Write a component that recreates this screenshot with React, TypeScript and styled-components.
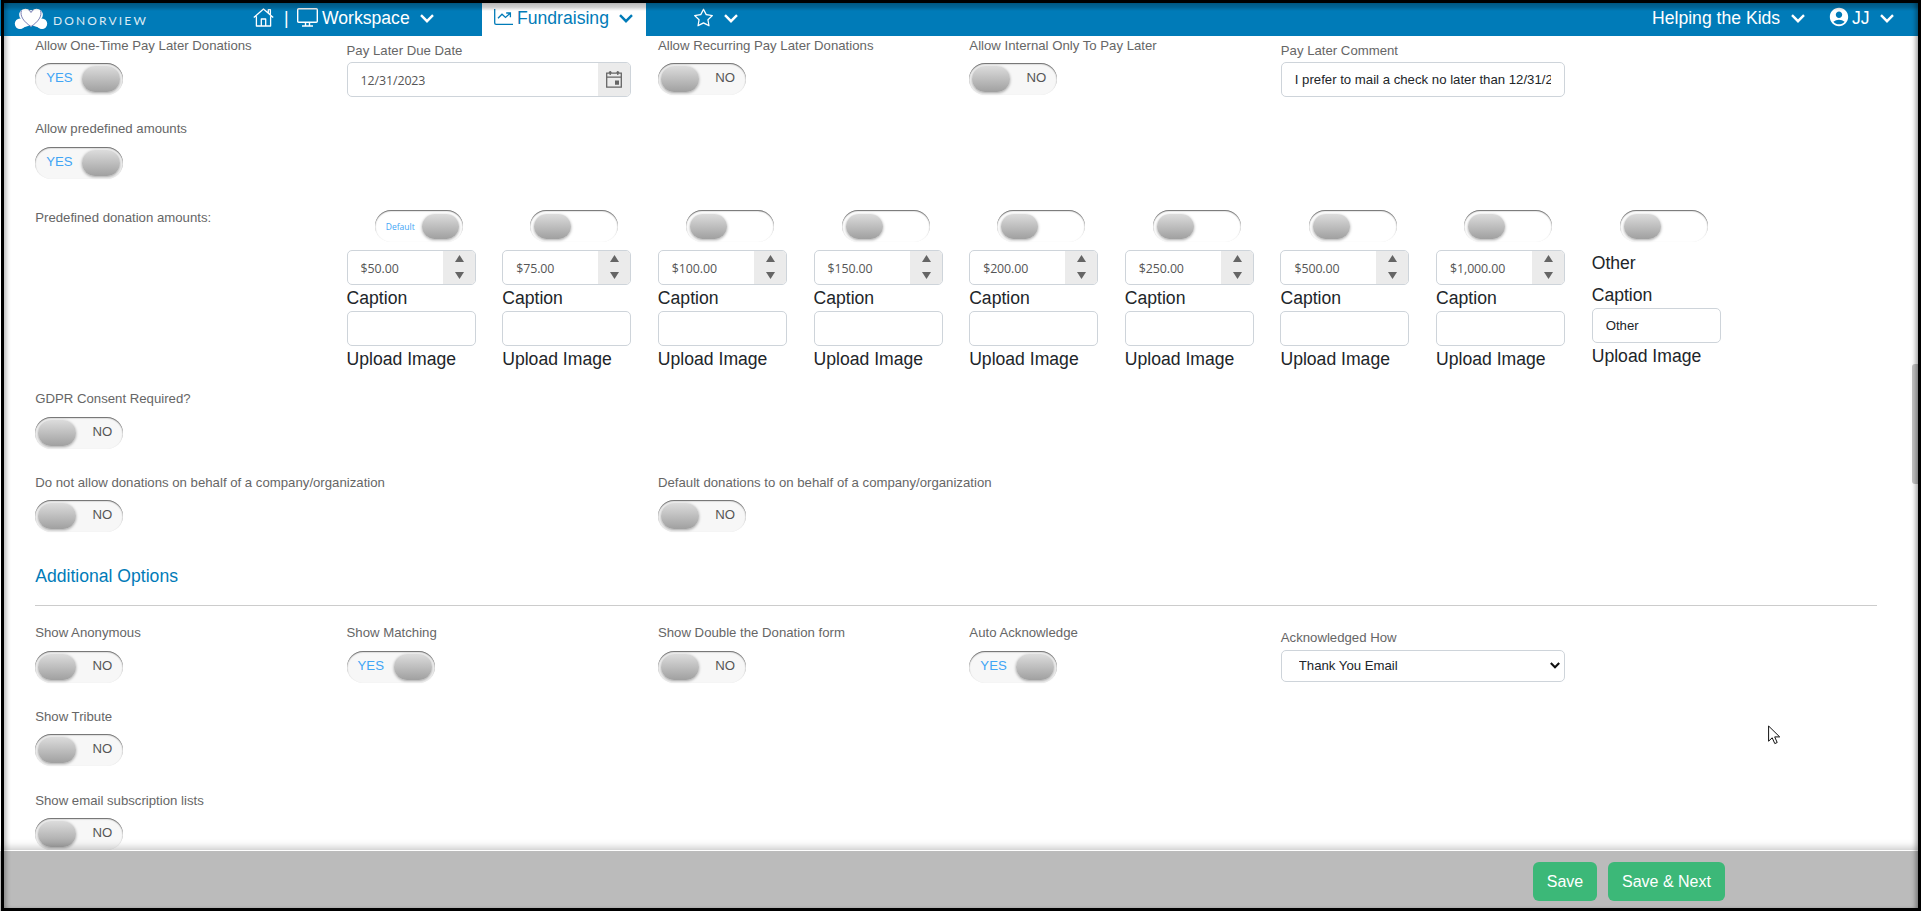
import React from "react";
import styled, { createGlobalStyle, css } from "styled-components";
import { BsStar } from "react-icons/bs";
import { MdAccountCircle } from "react-icons/md";

const BLUE = "#007bb8";

const GlobalStyle = createGlobalStyle`
  * { box-sizing: border-box; }
  html, body { margin: 0; padding: 0; overflow: hidden; background: #fff; }
  body { font-family: "Liberation Sans", Arial, sans-serif; color: #212529; }
`;

const Page = styled.div`
  height: 911px;
  display: flex;
  flex-direction: column;
  overflow: hidden;
  position: relative;
`;

/* ---------- window frame and overlays ---------- */

const Frame = styled.div`
  position: absolute;
  inset: 0 0 0 1px;
  border: 3px solid #000;
  pointer-events: none;
  z-index: 5;
  box-shadow: inset 5px 0 5px -3px rgba(0, 0, 0, 0.3), inset -5px 0 5px -3px rgba(0, 0, 0, 0.4);
  &::before {
    content: "";
    display: block;
    height: 8px;
    background: linear-gradient(rgba(0, 0, 0, 0.26) 0, rgba(0, 0, 0, 0.2) 50%, rgba(0, 0, 0, 0) 100%);
  }
`;

const ScrollThumb = styled.div`
  position: absolute;
  right: 3px;
  top: 364px;
  width: 6px;
  height: 120px;
  border-radius: 3px 0 0 3px;
  background: #c4c4c4;
`;

const Pointer = styled.svg`
  position: absolute;
  left: 1768px;
  top: 725px;
`;

/* ---------- top bar ---------- */

const TopBar = styled.header`
  flex: none;
  height: 36px;
  background: ${BLUE};
  color: #fff;
  display: flex;
  align-items: stretch;
  font-size: 17.6px;
  line-height: 30px;
  svg { flex: none; }
`;

const Brand = styled.div`
  width: 239px;
  padding: 8px 0 0 14px;
  display: flex;
  align-items: flex-start;
`;

const BrandName = styled.span`
  margin: 6px 0 0 5px;
  font-family: Lato, "Open Sans", sans-serif;
  font-size: 12px;
  line-height: 14px;
  letter-spacing: 2.15px;
  opacity: 0.85;
`;

const NavGroup = styled.div<{ $w?: number; $pad?: number; $active?: boolean }>`
  display: flex;
  align-items: flex-start;
  white-space: nowrap;
  padding: 3px 0 0 ${(p) => p.$pad ?? 0}px;
  ${(p) => p.$w && css`width: ${p.$w}px;`}
  ${(p) => p.$active && css`background: #fff; color: ${BLUE};`}
`;

const NavIcon = styled.span<{ $gap: number; $top?: number }>`
  display: flex;
  flex: none;
  margin: ${(p) => p.$top ?? 5}px ${(p) => p.$gap}px 0 0;
`;

const NavText = styled.span<{ $w: number }>`
  flex: none;
  width: ${(p) => p.$w}px;
`;

const Spacer = styled.div`
  flex: 1;
`;

const Chevron = () => (
  <NavIcon $gap={0} $top={11}>
    <svg width="14" height="9" viewBox="0 0 14 9" fill="none" stroke="currentColor" strokeWidth="2.4">
      <path d="M1 1.2 7 7.2 13 1.2" />
    </svg>
  </NavIcon>
);

/* ---------- form ---------- */

const Main = styled.main`
  flex: none;
  height: 814px;
  overflow: hidden;
  padding-left: 35.2px;
`;

const Row = styled.div<{ $h: number }>`
  display: flex;
  height: ${(p) => p.$h}px;
`;

const Cell = styled.div<{ $span?: number; $drop?: number; $gap?: number }>`
  flex: none;
  width: ${(p) => 311.4 * (p.$span ?? 1)}px;
  padding-top: ${(p) => p.$drop ?? 0}px;
  display: flex;
  flex-direction: column;
  align-items: flex-start;
  gap: ${(p) => p.$gap ?? 8}px;
`;

const Label = styled.label`
  font-size: 13.2px;
  line-height: 19px;
  height: 19px;
  color: #666;
  white-space: nowrap;
`;

const Track = styled.div<{ $on?: boolean; $plain?: boolean }>`
  width: 88px;
  height: 32px;
  border-radius: 16px;
  background: ${(p) => (p.$plain ? "#fff" : "#f7f7f7")};
  box-shadow: inset 0 1px 1px rgba(0, 0, 0, 0.5), inset 0 1px 2px rgba(0, 0, 0, 0.15);
  padding: ${(p) => (p.$plain ? "4px" : "3px")};
  display: flex;
  flex-direction: ${(p) => (p.$on ? "row" : "row-reverse")};
  justify-content: space-between;
`;

const Knob = styled.span<{ $plain?: boolean }>`
  width: ${(p) => (p.$plain ? 37 : 38)}px;
  height: ${(p) => (p.$plain ? 25 : 26)}px;
  border-radius: 13px;
  background: linear-gradient(#dcdcdc, #a0a0a0);
  box-shadow: 0 1px 3px rgba(0, 0, 0, 0.35);
`;

const State = styled.span<{ $on?: boolean; $small?: boolean }>`
  font-size: ${(p) => (p.$small ? 8.5 : 13.2)}px;
  line-height: ${(p) => (p.$small ? 25 : 24)}px;
  font-family: ${(p) => (p.$small ? '"Open Sans", sans-serif' : "inherit")};
  color: ${(p) => (p.$on ? "#41a5f5" : "#555")};
  margin: ${(p) => (p.$small ? "0 0 0 7px" : p.$on ? "0 0 0 8px" : "0 8px 0 0")};
`;

const Toggle = ({ on }: { on?: boolean }) => (
  <Track $on={on}>
    <State $on={on}>{on ? "YES" : "NO"}</State>
    <Knob />
  </Track>
);

const Box = styled.div<{ $w: number; $h?: number; $pad?: number; $lift?: number }>`
  width: ${(p) => p.$w}px;
  height: ${(p) => p.$h ?? 35}px;
  border: 1px solid #ced4da;
  border-radius: 5px;
  background: #fff;
  padding: 0 ${(p) => p.$pad ?? 13}px ${(p) => p.$lift ?? 0}px;
  display: flex;
  align-items: center;
  overflow: hidden;
  font-size: 13.2px;
  color: #212529;
  white-space: nowrap;
`;

const Clip = styled.span`
  overflow: hidden;
  flex: 1;
`;

const Numeric = styled.span`
  flex: 1;
  padding-top: 1px;
  font-family: "Open Sans", "Noto Sans", sans-serif;
  font-size: 12.4px;
  letter-spacing: -0.1px;
  color: #555;
`;

const Addon = styled.span`
  width: 32px;
  margin-right: -13px;
  padding: 0 0 1px 1px;
  height: 100%;
  background: #ebebeb;
  color: #656565;
  display: flex;
  flex-direction: column;
  align-items: center;
  justify-content: center;
  gap: 10px;
`;

const SelectArrow = styled.svg`
  flex: none;
  margin-right: -13px;
`;

const Amounts = styled.div`
  display: flex;
`;

const AmountColumn = styled.div`
  flex: none;
  width: 155.65px;
  padding-top: 2px;
`;

const AmountToggle = styled.div`
  padding-left: 28.2px;
  height: 40px;
`;

const Caption = styled.div<{ $h?: number }>`
  font-size: 17.6px;
  line-height: 26px;
  height: ${(p) => p.$h ?? 26}px;
`;

const SectionTitle = styled.h2`
  margin: 0;
  height: 49px;
  padding-top: 7px;
  font-size: 17.6px;
  font-weight: 400;
  line-height: 26px;
  color: ${BLUE};
`;

const Rule = styled.hr`
  margin: 0 0 17px;
  width: 1842px;
  height: 1px;
  border: 0;
  background: #ccc;
`;

const Footer = styled.footer`
  flex: 1;
  margin-top: 1px;
  background: #bbb;
  box-shadow: 0 -1px 0 #fff, 0 -3px 8px rgba(0, 0, 0, 0.24);
  position: relative;
  padding: 11px 196px 0 0;
  display: flex;
  justify-content: flex-end;
  gap: 11px;
`;

const Button = styled.button<{ $w: number }>`
  width: ${(p) => p.$w}px;
  height: 39px;
  padding: 0;
  border: 0;
  border-radius: 6px;
  background: #3cb878;
  color: #fff;
  font: 16px "Liberation Sans", Arial, sans-serif;
`;

const Triangle = ({ down }: { down?: boolean }) => (
  <svg width="9" height="7" viewBox="0 0 9 7" fill="currentColor">
    <path d={down ? "M0 0H9L4.5 7Z" : "M0 7H9L4.5 0Z"} />
  </svg>
);

const amounts = ["$50.00", "$75.00", "$100.00", "$150.00", "$200.00", "$250.00", "$500.00", "$1,000.00"];

const AmountSwitch = ({ on }: { on?: boolean }) => (
  <AmountToggle>
    <Track $plain $on={on}>
      {on ? <State $on $small>Default</State> : <span />}
      <Knob $plain />
    </Track>
  </AmountToggle>
);

export default function App() {
  return (
    <Page>
      <GlobalStyle />
      <TopBar>
        <Brand>
          <svg width="34" height="22" viewBox="0 0 34 22">
            <g fill="#fff">
              <circle cx="11.5" cy="7" r="6.3" />
              <circle cx="22.5" cy="7" r="6.3" />
              <path d="M5.5 6 17 19 28.5 6 17 2Z" />
              <circle cx="6" cy="15.8" r="5.2" />
              <circle cx="28" cy="15.8" r="5.2" />
              <path d="M5 21 17 17 29 21 22 10H12Z" />
            </g>
            <path d="M17 19V22H11ZM17 19V22H23Z" fill={BLUE} />
            <path d="M7.5 2.5C5.5 8 10 14 17 18.5C24 14 28.5 8 26.5 2.5M14.5 2Q16.5 3 17 4.5Q17.5 3 19.5 2" fill="none" stroke="#6b71ac" strokeWidth=".9" />
          </svg>
          <BrandName>DONORVIEW</BrandName>
        </Brand>
        <NavGroup $pad={14} $w={243}>
          <NavIcon $gap={10}>
            <svg width="21" height="19" viewBox="0 0 21 19" fill="none" stroke="currentColor" strokeWidth="1.3" strokeLinejoin="round">
              <path d="M.8 9.6 10.5 1 20.2 9.6M15.3 4.8V1.6H17.4V7M3.4 8.2V18H17.6V8.2M8.3 18V11H12.7V18" />
            </svg>
          </NavIcon>
          <NavText $w={13}>|</NavText>
          <NavIcon $gap={4}>
            <svg width="21" height="19" viewBox="0 0 21 19" fill="none" stroke="currentColor" strokeWidth="1.4" strokeLinejoin="round">
              <path d="M1.7.7H19.3Q20.3.7 20.3 1.7V13.3Q20.3 14.3 19.3 14.3H1.7Q.7 14.3 .7 13.3V1.7Q.7.7 1.7.7ZM8.5 14.3V17.8M12.5 14.3V17.8M5 18H16" />
            </svg>
          </NavIcon>
          <NavText $w={98}>Workspace</NavText>
          <Chevron />
        </NavGroup>
        <NavGroup $active $pad={12} $w={164}>
          <NavIcon $gap={4} $top={6}>
            <svg width="19" height="17" viewBox="0 0 19 17" fill="none" stroke="currentColor" strokeWidth="1.3">
              <path d="M.7 0V14Q.7 15.4 2.1 15.4H19M4 9.2 8 5.2 11.5 8.4 16.2 4.2M12.2 4H16.4V8.2" />
            </svg>
          </NavIcon>
          <NavText $w={102}>Fundraising</NavText>
          <Chevron />
        </NavGroup>
        <NavGroup $pad={48}>
          <NavIcon $gap={11}><BsStar size={19} /></NavIcon>
          <Chevron />
        </NavGroup>
        <Spacer />
        <NavGroup $w={269}>
          <NavText $w={139}>Helping the Kids</NavText>
          <Chevron />
          <NavText $w={23} />
          <NavIcon $gap={2} $top={3}><MdAccountCircle size={22} /></NavIcon>
          <NavText $w={28}>JJ</NavText>
          <Chevron />
        </NavGroup>
      </TopBar>

      <Main>
        <Row $h={83}>
          <Cell>
            <Label>Allow One-Time Pay Later Donations</Label>
            <Toggle on />
          </Cell>
          <Cell $drop={5} $gap={2}>
            <Label>Pay Later Due Date</Label>
            <Box $w={284}>
              <Numeric>12/31/2023</Numeric>
              <Addon>
                <svg width="16" height="18" viewBox="0 0 16 18" fill="none" stroke="currentColor" strokeWidth="1.3">
                  <path d="M.7 3.2H15.3V17.2H.7ZM.7 7.2H15.3M4.2 1V5M11.8 1V5M2.8 2.5H5.6M10.4 2.5H13.2" />
                  <path d="M9 10.5H13V14.8H9Z" fill="currentColor" stroke="none" />
                </svg>
              </Addon>
            </Box>
          </Cell>
          <Cell>
            <Label>Allow Recurring Pay Later Donations</Label>
            <Toggle />
          </Cell>
          <Cell>
            <Label>Allow Internal Only To Pay Later</Label>
            <Toggle />
          </Cell>
          <Cell $drop={5} $gap={2}>
            <Label>Pay Later Comment</Label>
            <Box $w={284}><Clip>I prefer to mail a check no later than 12/31/2023</Clip></Box>
          </Cell>
        </Row>

        <Row $h={89}>
          <Cell $gap={9}>
            <Label>Allow predefined amounts</Label>
            <Toggle on />
          </Cell>
        </Row>

        <Row $h={181}>
          <Cell>
            <Label>Predefined donation amounts:</Label>
          </Cell>
          <Amounts>
            {amounts.map((value, i) => (
              <AmountColumn key={value}>
                <AmountSwitch on={i === 0} />
                <Box $w={129}>
                  <Numeric>{value}</Numeric>
                  <Addon><Triangle /><Triangle down /></Addon>
                </Box>
                <Caption>Caption</Caption>
                <Box $w={129} />
                <Caption>Upload Image</Caption>
              </AmountColumn>
            ))}
            <AmountColumn>
              <AmountSwitch />
              <Caption $h={32}>Other</Caption>
              <Caption>Caption</Caption>
              <Box $w={129}>Other</Box>
              <Caption>Upload Image</Caption>
            </AmountColumn>
          </Amounts>
        </Row>

        <Row $h={84}>
          <Cell $gap={9}>
            <Label>GDPR Consent Required?</Label>
            <Toggle />
          </Cell>
        </Row>
        <Row $h={83}>
          <Cell $span={2}>
            <Label>Do not allow donations on behalf of a company/organization</Label>
            <Toggle />
          </Cell>
          <Cell $span={2}>
            <Label>Default donations to on behalf of a company/organization</Label>
            <Toggle />
          </Cell>
        </Row>

        <SectionTitle>Additional Options</SectionTitle>
        <Rule />

        <Row $h={84}>
          <Cell $gap={9}><Label>Show Anonymous</Label><Toggle /></Cell>
          <Cell $gap={9}><Label>Show Matching</Label><Toggle on /></Cell>
          <Cell $gap={9}><Label>Show Double the Donation form</Label><Toggle /></Cell>
          <Cell $gap={9}><Label>Auto Acknowledge</Label><Toggle on /></Cell>
          <Cell $drop={5} $gap={3}>
            <Label>Acknowledged How</Label>
            <Box $w={284} $h={32} $pad={17} $lift={1}>
              <Clip>Thank You Email</Clip>
              <SelectArrow width="10" height="7" viewBox="0 0 10 7" fill="none" stroke="#111" strokeWidth="2.1">
                <path d="M.8 1 5 5.2 9.2 1" />
              </SelectArrow>
            </Box>
          </Cell>
        </Row>
        <Row $h={84}>
          <Cell><Label>Show Tribute</Label><Toggle /></Cell>
        </Row>
        <Row $h={60}>
          <Cell><Label>Show email subscription lists</Label><Toggle /></Cell>
        </Row>
      </Main>

      <Footer>
        <Button $w={64}>Save</Button>
        <Button $w={117}>Save &amp; Next</Button>
      </Footer>

      <ScrollThumb />
      <Pointer width="13" height="20" viewBox="0 0 13 20">
        <path d="M.6 1V16.2L4.2 12.8 6.8 18.6 9.2 17.5 6.7 11.9H11.7Z" fill="#fff" stroke="#111" strokeWidth="1" />
      </Pointer>
      <Frame />
    </Page>
  );
}
